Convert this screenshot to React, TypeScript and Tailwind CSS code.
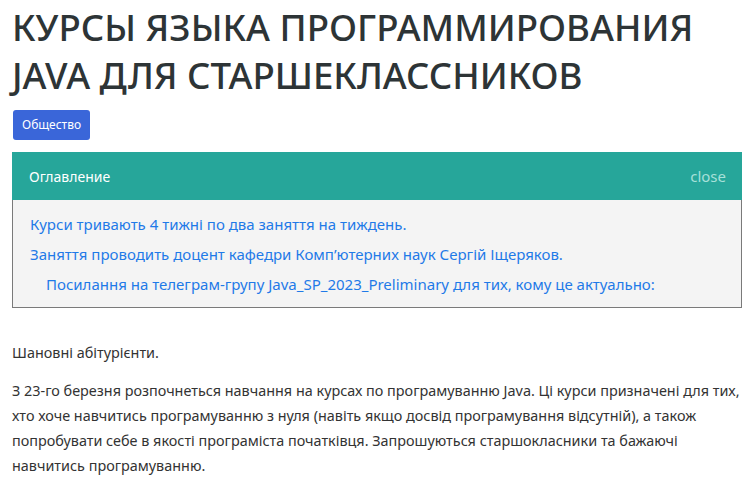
import React from "react";

const links = [
  { text: "Курси тривають 4 тижні по два заняття на тиждень.", indent: false },
  { text: "Заняття проводить доцент кафедри Комп’ютерних наук Сергій Іщеряков.", indent: false },
  {
    text: "Посилання на телеграм-групу Java_SP_2023_Preliminary для тих, кому це актуально:",
    indent: true,
  },
];

export default function App() {
  return (
    <div className="min-h-[478px] bg-white px-3 font-['Noto_Sans',sans-serif] text-[#333]">
      <h1 className="pt-[3px] text-[36.6px] font-medium uppercase leading-[48px] text-[#2d3436]">
        Курсы языка программирования Java для старшеклассников
      </h1>

      <div className="mt-[11px] pl-px">
        <span className="inline-flex h-[30px] items-center rounded-[3px] bg-[#3a66d9] px-[9px] text-[12px] text-white">
          Общество
        </span>
      </div>

      <div className="mt-[12px]">
        <div className="flex h-[48px] items-center justify-between bg-[#26a69a] pl-[17px] pr-[16px]">
          <span className="text-[14px] text-white">Оглавление</span>
          <span className="text-[15px] text-[#a6e0d9]">close</span>
        </div>
        <div className="flex h-[108px] flex-col gap-[6px] border border-t-0 border-[#7a7a7a] bg-[#f4f4f4] px-[17px] pt-[12px]">
          {links.map((l) => (
            <a
              key={l.text}
              href="#"
              className={"text-[15px] leading-[24px] text-[#1f7ae8] " + (l.indent ? "pl-[16px]" : "")}
            >
              {l.text}
            </a>
          ))}
        </div>
      </div>

      <p className="mt-[32px] text-[14.4px] leading-[25px]">Шановні абітурієнти.</p>
      <p className="mt-[13px] text-[14.4px] leading-[25px]">
        З 23-го березня розпочнеться навчання на курсах по програмуванню Java. Ці курси призначені для тих,
        хто хоче навчитись програмуванню з нуля (навіть якщо досвід програмування відсутній), а також
        попробувати себе в якості програміста початківця. Запрошуються старшокласники та бажаючі
        навчитись програмуванню.
      </p>
    </div>
  );
}
